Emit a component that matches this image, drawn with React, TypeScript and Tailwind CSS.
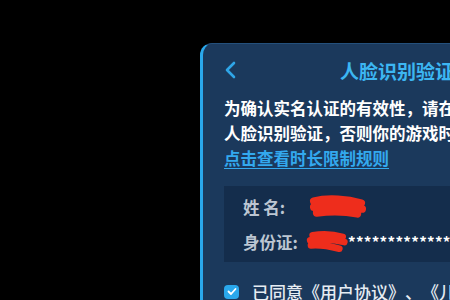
import React from "react";

function Scribble({ d, className }: { d: string; className: string }) {
  return (
    <svg className={className} viewBox="0 0 60 26" fill="none">
      <path d={d} stroke="#ee2d1c" strokeWidth="8" strokeLinecap="round" strokeLinejoin="round" />
    </svg>
  );
}

export default function App() {
  return (
    <div
      className="h-[300px] w-[450px] overflow-hidden bg-black pl-[200px] pt-[43px] [text-spacing-trim:space-all]"
      style={{ fontFamily: '"Noto Sans CJK SC", "Noto Sans", sans-serif' }}
    >
      <div className="h-[300px] w-[400px] rounded-tl-[12px] border-l-[3px] border-t border-l-[#2aa8ec] border-t-[#24507c] bg-[#1b395c] pl-[21px]">
        <div className="flex h-[52px] items-center">
          <svg className="h-[18px] w-[12px]" viewBox="0 0 12 18" fill="none">
            <path d="M10 2 L3 9 L10 16" stroke="#2fa6e8" strokeWidth="2.6" strokeLinecap="round" strokeLinejoin="round" />
          </svg>
          <span className="ml-[104px] whitespace-nowrap text-[19px] font-bold leading-none text-[#3cb6f2]">
            人脸识别验证
          </span>
        </div>
        <div className="whitespace-nowrap text-[16.5px] font-bold leading-[25px] text-white">
          <p>为确认实名认证的有效性，请在规定时间内完成</p>
          <p>人脸识别验证，否则你的游戏时长将受到限制。</p>
          <p className="text-[#33a9ee] underline decoration-1 underline-offset-[3px]">点击查看时长限制规则</p>
        </div>
        <div className="mt-[15px] flex h-[76px] flex-col justify-center gap-[9px] bg-[#142d4c] pl-[19px] text-[16.5px] font-bold leading-[22px] text-[#bcc6d2]">
          <div className="flex items-center">
            <span className="w-[67px] whitespace-nowrap">姓 名:</span>
            <Scribble className="-ml-[1px] h-[26px] w-[58px]" d="M5 7 C20 3 40 5 54 9 M5 13 C22 10 40 12 55 15 M8 19 C25 17 40 18 50 20" />
          </div>
          <div className="flex items-center">
            <span className="w-[64px] whitespace-nowrap">身份证:</span>
            <Scribble className="-ml-[1px] h-[26px] w-[50px]" d="M8 5 C20 3 34 4 44 7 M5 11 C18 9 32 10 46 13 M6 17 C16 16 28 18 40 21" />
            <span className="-ml-[8px] whitespace-nowrap text-[15px] tracking-[0.3px] text-white">*************8</span>
          </div>
        </div>
        <div className="mt-[17px] flex items-center gap-[13px]">
          <span className="flex h-[14px] w-[15px] items-center justify-center rounded-[4px] bg-[#2aa8ec]">
            <svg className="h-[9px] w-[10px]" viewBox="0 0 10 9" fill="none">
              <path d="M1.5 4.5 L4 7 L8.5 2" stroke="white" strokeWidth="1.8" strokeLinecap="round" strokeLinejoin="round" />
            </svg>
          </span>
          <span className="whitespace-nowrap text-[17px] font-medium text-[#e6ecf2]">已同意《用户协议》、《儿童隐私保护指引》</span>
        </div>
      </div>
    </div>
  );
}
